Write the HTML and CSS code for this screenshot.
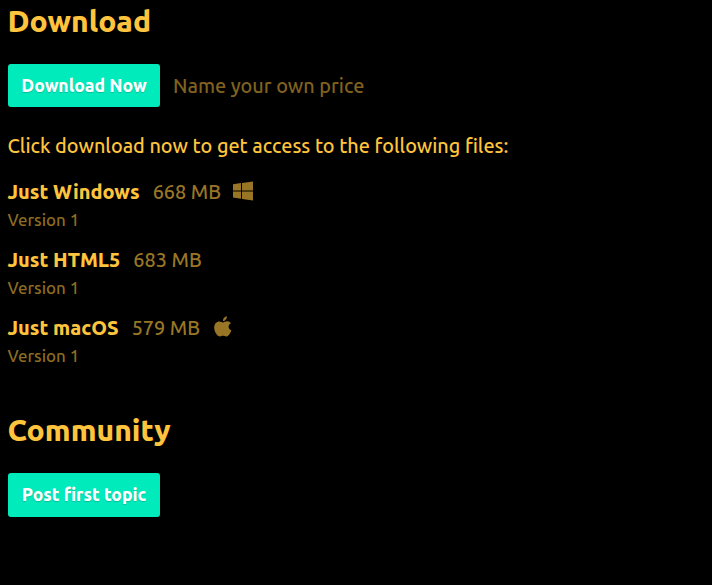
FILE: index.html
```html
<!DOCTYPE html>
<html lang="en">
<head>
<meta charset="utf-8">
<title>Download</title>
<link rel="stylesheet" href="styles.css">
</head>
<body>
<main class="page">
  <section class="download">
    <h2>Download</h2>
    <div class="buy-row">
      <a class="button">Download Now</a>
      <span class="price">Name your own price</span>
    </div>
    <p class="intro">Click download now to get access to the following files:</p>
    <div class="upload">
      <div class="file"><strong>Just Windows</strong><span class="size">668 MB</span>
        <svg class="windows" viewBox="0 0 20 20"><path d="M0 3.2 8 2.1V9.4H0zM9 2 20 .4V9.4H9zM0 10.4H8V17.7L0 16.6zM9 10.4H20V19.5L9 17.9z"/></svg>
      </div>
      <div class="version">Version 1</div>
    </div>
    <div class="upload">
      <div class="file"><strong>Just HTML5</strong><span class="size">683 MB</span></div>
      <div class="version">Version 1</div>
    </div>
    <div class="upload">
      <div class="file"><strong>Just macOS</strong><span class="size">579 MB</span>
        <svg class="apple" viewBox="0 0 18 21"><path d="M17.4 14.2C16.200 17.500 14.200 20.500 12.200 20.500C11 20.500 10.400 19.800 9.100 19.800C7.700 19.800 7 20.500 6 20.500C3.300 20.500.2 15.800.2 11.500C.2 7.500 2.700 5.400 5.200 5.400C6.900 5.400 8.100 6.400 9 6.400C9.900 6.400 11.300 5.300 13.200 5.300C14.800 5.300 16.100 6.100 16.900 7.200C13.500 9.100 14 13 17.400 14.200ZM9 5.100C8.700 2.700 10.700.5 12.900.2C13.200 2.600 11.100 4.900 9 5.100Z"/></svg>
      </div>
      <div class="version">Version 1</div>
    </div>
  </section>
  <section class="community">
    <h2>Community</h2>
    <a class="button">Post first topic</a>
  </section>
</main>
</body>
</html>
```
FILE: styles.css
```css
* { box-sizing: border-box; }
body {
  margin: 0;
  background: #000;
  color: #ffc43d;
  font-family: Ubuntu, "Noto Sans", sans-serif;
  font-size: 19.83px;
  font-weight: 500;
  line-height: 28px;
}
.page { padding: 2px 8px; }
h2 { margin: 0 0 24px -0.5px; font-size: 30px; line-height: 38px; font-weight: 800; }
strong { font-size: 19.95px; font-weight: 800; }
.buy-row { display: flex; align-items: center; gap: 13px; height: 43px; }
.button {
  display: flex;
  align-items: center;
  justify-content: center;
  width: 152px;
  height: 43px;
  border-radius: 3px;
  background: #00ebbc;
  color: #fff;
  font-size: 17.5px;
  font-weight: 800;
  white-space: nowrap;
  text-shadow: 0 1px 1px rgba(0, 90, 70, .3);
}
.price { color: #80621f; }
.intro { margin: 25px 0 18px -0.5px; white-space: nowrap; }
.upload { height: 68px; margin-left: -0.5px; }
.file { display: flex; align-items: center; height: 28px; }
.size { margin-left: 13px; color: #997625; }
.version { color: #8c6c22; font-size: 16.9px; line-height: 28px; }
svg { fill: #997625; margin-bottom: 2px; }
.windows { width: 20px; height: 20px; margin-left: 12px; }
.apple { width: 18px; height: 21px; margin-left: 13.5px; margin-bottom: 3px; }
.community { margin-top: 29px; }
.community .button { height: 44px; }
```
